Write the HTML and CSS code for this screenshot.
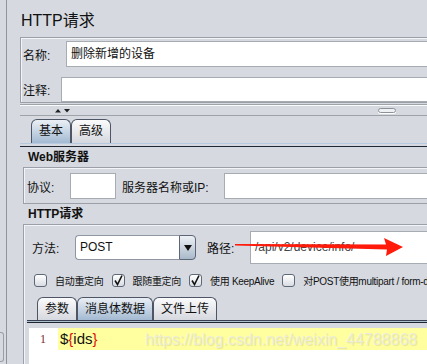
FILE: index.html
```html
<!DOCTYPE html>
<html lang="zh-CN">
<head>
    <meta charset="UTF-8">
    <title>HTTP请求</title>
    <link rel="stylesheet" href="styles.css">
</head>
<body>
    <div class="window">
        <div class="side">
            <div class="side-thumb"></div>
        </div>

        <div class="main">
            <h1 class="title">HTTP请求</h1>

            <!-- Name / comment -->
            <div class="panel name-panel">
                <div class="field-row row-name">
                    <span class="field-label">名称:</span>
                    <div class="field">删除新增的设备</div>
                </div>
                <div class="field-row row-comment">
                    <span class="field-label">注释:</span>
                    <div class="field"></div>
                </div>
            </div>

            <!-- Splitter -->
            <div class="splitter">
                <svg class="split-arrows" width="16" height="5" viewBox="0 0 16 5">
                    <path d="M0 4.5 L3 1 L6 4.5 Z" fill="#222"/>
                    <path d="M9 1 L15 1 L12 4.5 Z" fill="#222"/>
                </svg>
                <span class="split-grip"></span>
            </div>

            <!-- Main tabs -->
            <div class="tabs">
                <div class="tab active">基本</div>
                <div class="tab">高级</div>
            </div>
            <div class="tab-band"></div>

            <div class="section-title">Web服务器</div>
            <div class="box web-box">
                <span class="label-proto">协议:</span>
                <div class="field proto-field"></div>
                <span class="label-host">服务器名称或IP:</span>
                <div class="field host-field"></div>
            </div>

            <div class="section-title second">HTTP请求</div>
            <div class="box http-box">
                <div class="method-row">
                    <span class="label-method">方法:</span>
                    <div class="select">
                        <div class="select-value">POST</div>
                        <div class="select-btn">
                            <svg width="8" height="6" viewBox="0 0 8 6"><path d="M0 0 L8 0 L4 6 Z" fill="#111"/></svg>
                        </div>
                    </div>
                    <span class="label-path">路径:</span>
                    <div class="field path-field">/api/v2/device/info/</div>
                </div>

                <div class="check-row">
                    <div class="check-item">
                        <span class="check"></span>
                        <span class="check-text">自动重定向</span>
                    </div>
                    <div class="check-item">
                        <span class="check">
                            <svg width="11" height="11" viewBox="0 0 11 11"><path d="M2 5.5 L4.5 9.5 L9 0.5" fill="none" stroke="#111" stroke-width="1.6"/></svg>
                        </span>
                        <span class="check-text">跟随重定向</span>
                    </div>
                    <div class="check-item">
                        <span class="check">
                            <svg width="11" height="11" viewBox="0 0 11 11"><path d="M2 5.5 L4.5 9.5 L9 0.5" fill="none" stroke="#111" stroke-width="1.6"/></svg>
                        </span>
                        <span class="check-text">使用 KeepAlive</span>
                    </div>
                    <div class="check-item">
                        <span class="check"></span>
                        <span class="check-text">对POST使用multipart / form-data</span>
                    </div>
                </div>

                <!-- Sub tabs -->
                <div class="subtabs">
                    <div class="tab sub">参数</div>
                    <div class="tab sub active">消息体数据</div>
                    <div class="tab sub">文件上传</div>
                </div>
                <div class="tab-band sub-band"></div>

                <div class="editor">
                    <div class="code-line">
                        <span class="gutter">1</span>
                        <span class="code">$<span class="brace">{</span>ids<span class="brace">}</span></span>
                    </div>
                </div>
            </div>
        </div>

        <!-- annotation overlays -->
        <svg class="arrow" width="176" height="26" viewBox="0 0 176 26">
            <polygon points="5,10 156,10.5 154,4 173,13 156,22 157,15.5 5,11.5" fill="#ff1a0a"/>
        </svg>
        <div class="watermark">https://blog.csdn.net/weixin_44788868</div>
    </div>
</body>
</html>
```

FILE: styles.css
```css
/* Global */
body {
    margin: 0;
    background-color: #d6d9e0;
    font-family: "Liberation Sans", "Noto Sans CJK SC", sans-serif;
    font-size: 12px;
    color: #111;
    overflow: hidden;
}

.window {
    position: relative;
    display: flex;
    width: 427px;
    height: 364px;
    overflow: hidden;
}

/* Left edge */
.side {
    flex: none;
    width: 6px;
    border-right: 1px solid #8f939a;
    display: flex;
    flex-direction: column;
}

.side-thumb {
    margin-top: auto;
    margin-bottom: 2px;
    width: 3px;
    height: 28px;
    border: 1px solid #9a9ea5;
    border-left: none;
    border-radius: 0 3px 3px 0;
}

.main {
    flex: none;
    width: 480px;
    padding-left: 13px;
}

.title {
    margin: 11px 0 6px 1px;
    font-size: 16px;
    font-weight: normal;
    line-height: 20px;
}

/* Panels */
.panel,
.box {
    border: 1px solid #9b9fa7;
    box-shadow: inset 1px 1px 0 #f3f4f7;
}

.field {
    background-color: #fff;
    border: 1px solid #a7abb2;
    box-sizing: border-box;
}

.name-panel {
    padding-top: 3px;
}

.field-row {
    display: flex;
    align-items: center;
}

.field-row .field {
    flex: 1;
    padding-left: 4px;
    font-size: 12px;
}

.row-name .field-label {
    width: 43px;
}

.row-name .field {
    height: 26px;
    line-height: 24px;
}

.row-comment {
    margin-top: 10px;
}

.row-comment .field-label {
    width: 38px;
}

.row-comment .field {
    height: 25px;
}

.field-label {
    padding-left: 2px;
}

/* Splitter */
.splitter {
    margin-top: 1px;
    height: 10px;
    border-top: 1px solid #9ea2a9;
    border-bottom: 1px solid #9ea2a9;
    box-shadow: inset 0 1px 0 #fbfbfc;
    display: flex;
    align-items: center;
}

.split-arrows {
    margin-left: 35px;
    margin-top: 1px;
}

.split-grip {
    margin-left: 307px;
    width: 16px;
    height: 3px;
    border: 1px solid #8d9199;
    border-radius: 3px;
    background-color: #eef0f3;
    box-shadow: 0 1px 0 #fff;
}

/* Tabs */
.tabs {
    display: flex;
    margin-top: 3px;
    padding-left: 11px;
}

.tab {
    height: 24px;
    box-sizing: border-box;
    padding: 0 7px;
    border: 1px solid #4e5665;
    border-bottom: none;
    border-radius: 6px 6px 0 0;
    line-height: 23px;
    font-size: 12px;
    background: linear-gradient(#fbfbfc, #d5d8de);
}

.tab.active {
    background: linear-gradient(#eaeff5, #a3bad2);
}

.tab-band {
    height: 4px;
    box-sizing: border-box;
    border-top: 1px solid #b6cadf;
    border-bottom: 1px solid #1f2634;
}

.section-title {
    height: 20px;
    line-height: 21px;
    padding-left: 8px;
    font-weight: bold;
}

.section-title.second {
    height: 20px;
    line-height: 21px;
}

/* Web server */
.web-box {
    margin-left: 3px;
    padding: 5px 0 4px 3px;
    display: flex;
    align-items: center;
}

.label-proto {
    width: 43px;
}

.proto-field {
    width: 46px;
    height: 26px;
}

.label-host {
    margin-left: 6px;
    width: 102px;
}

.host-field {
    flex: 1;
    height: 26px;
}

/* HTTP request */
.http-box {
    margin-left: 3px;
    padding-top: 6px;
    height: 160px;
}

.method-row {
    display: flex;
    align-items: center;
    height: 33px;
    padding-left: 8px;
}

.label-method {
    width: 43px;
}

.select {
    display: flex;
    width: 121px;
    height: 25px;
}

.select-value {
    flex: 1;
    background-color: #fff;
    border: 1px solid #8f96a1;
    border-right: none;
    border-radius: 4px 0 0 4px;
    padding-left: 4px;
    line-height: 23px;
    font-size: 12px;
}

.select-btn {
    width: 17px;
    box-sizing: border-box;
    border: 1px solid #5d6675;
    border-radius: 0 4px 4px 0;
    background: linear-gradient(#edf1f5, #a9b8c9);
    display: flex;
    align-items: center;
    justify-content: center;
}

.label-path {
    margin-left: 11px;
    width: 43px;
}

.path-field {
    flex: 1;
    height: 33px;
    line-height: 31px;
    padding-left: 4px;
    color: #444;
}

.check-row {
    display: flex;
    align-items: center;
    margin-top: 10px;
    height: 13px;
    padding-left: 10px;
    white-space: nowrap;
}

.check-item {
    display: flex;
    align-items: center;
    margin-right: 8px;
}

.check {
    width: 13px;
    height: 13px;
    box-sizing: border-box;
    border: 1px solid #5f6877;
    border-radius: 3px;
    background: linear-gradient(#fff, #d8dce2);
    margin-right: 8px;
    display: flex;
    align-items: center;
    justify-content: center;
}

.check-text {
    font-size: 10px;
    letter-spacing: -0.3px;
}

.subtabs {
    display: flex;
    margin: 10px 0 0 3px;
    padding-left: 10px;
}

.tab.sub {
    height: 23px;
    line-height: 22px;
}

.sub-band {
    height: 3px;
    margin-left: 3px;
    border-top: 1px solid #3a4252;
    background-color: #aebfd0;
}

/* Editor */
.editor {
    margin: 5px 0 0 5px;
    height: 60px;
    background-color: #fff;
}

.code-line {
    display: flex;
    height: 22px;
}

.gutter {
    width: 18px;
    padding-left: 11px;
    color: #7d2a2a;
    font-family: "Liberation Serif", serif;
    font-size: 12px;
    line-height: 22px;
}

.code {
    flex: 1;
    background-color: #ffffa0;
    padding-left: 2px;
    font-size: 15px;
    line-height: 22px;
}

.brace {
    color: #e01010;
}

/* Overlays */
.arrow {
    position: absolute;
    left: 230px;
    top: 234px;
}

.watermark {
    position: absolute;
    left: 145px;
    top: 331px;
    font-size: 16px;
    color: rgba(236, 236, 230, 0.85);
    text-shadow: 1px 1px 1px rgba(0, 0, 0, 0.1);
    white-space: nowrap;
}
```
